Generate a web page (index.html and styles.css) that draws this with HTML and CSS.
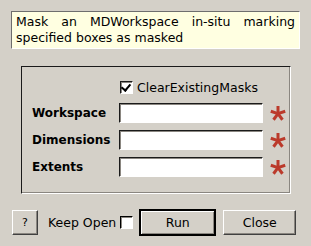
FILE: index.html
```html
<!DOCTYPE html>
<html lang="en">
<head>
    <meta charset="UTF-8">
    <title>MaskMD</title>
    <link rel="stylesheet" href="styles.css">
</head>
<body>
<div class="dialog">
    <div class="desc">Mask an MDWorkspace in-situ marking specified boxes as masked</div>

    <div class="group">
        <div class="fields">
            <span></span>
            <label class="check-row"><span class="check checked"></span>ClearExistingMasks</label>
            <span></span>

            <span class="field-label">Workspace</span>
            <span class="field-input"></span>
            <svg class="star" viewBox="0 0 16 16"><use href="#asterisk"/></svg>

            <span class="field-label">Dimensions</span>
            <span class="field-input"></span>
            <svg class="star" viewBox="0 0 16 16"><use href="#asterisk"/></svg>

            <span class="field-label">Extents</span>
            <span class="field-input"></span>
            <svg class="star" viewBox="0 0 16 16"><use href="#asterisk"/></svg>
        </div>
    </div>

    <div class="buttons">
        <button class="btn help">?</button>
        <span class="keep">Keep Open <span class="check"></span></span>
        <button class="btn run">Run</button>
        <button class="btn close">Close</button>
    </div>
</div>

<svg width="0" height="0" class="defs">
    <defs>
        <g id="asterisk" stroke="#bb3a2b" stroke-width="3" stroke-linecap="butt">
            <line x1="8" y1="8.6" x2="8" y2="1"/>
            <line x1="8" y1="8.6" x2="8" y2="1" transform="rotate(72 8 8.6)"/>
            <line x1="8" y1="8.6" x2="8" y2="1" transform="rotate(144 8 8.6)"/>
            <line x1="8" y1="8.6" x2="8" y2="1" transform="rotate(216 8 8.6)"/>
            <line x1="8" y1="8.6" x2="8" y2="1" transform="rotate(288 8 8.6)"/>
        </g>
    </defs>
</svg>
</body>
</html>
```

FILE: styles.css
```css
body {
    margin: 0;
    background-color: #d4d0c8;
    font-family: 'DejaVu Sans', sans-serif;
    font-size: 12px;
    color: #000;
}
.dialog {
    padding: 11px 12px 0 11px;
}
.desc {
    box-sizing: border-box;
    width: 289px;
    height: 38px;
    padding: 2px 4px 0 4px;
    background-color: #ffffe1;
    border: 1px solid;
    border-color: #6e6e6e #ffffff #ffffff #6e6e6e;
    text-align: justify;
    line-height: 16px;
    font-size: 12.5px;
}
.group {
    box-sizing: border-box;
    width: 270px;
    height: 128px;
    margin: 17px 0 0 10px;
    padding: 13px 0 0 9px;
    border: 1px solid;
    border-color: #1a1a1a #ffffff #ffffff #1a1a1a;
    box-shadow: inset -1px -1px 0 #8a8680;
}
.fields {
    display: grid;
    grid-template-columns: 88px 144px 23px;
    row-gap: 7px;
    align-items: center;
}
.check-row {
    display: flex;
    align-items: center;
    gap: 4px;
    height: 14px;
    margin-left: 1px;
    margin-bottom: 2px;
    font-size: 12.5px;
}
.check {
    display: inline-block;
    box-sizing: border-box;
    width: 13px;
    height: 13px;
    background: #fff;
    border: 1px solid;
    border-color: #1a1a1a #ffffff #ffffff #1a1a1a;
    box-shadow: 1px 1px 0 #8a8680 inset;
    position: relative;
}
.check.checked::after {
    content: '';
    position: absolute;
    left: 2px;
    top: 0;
    width: 4px;
    height: 7px;
    border: solid #000;
    border-width: 0 2px 2px 0;
    transform: rotate(40deg);
}
.field-label {
    font-weight: bold;
    margin-left: 1px;
}
.field-input {
    box-sizing: border-box;
    height: 20px;
    background: #fff;
    border: 1px solid;
    border-color: #1a1a1a #ffffff #ffffff #1a1a1a;
    box-shadow: inset 1px 1px 0 #8a8680;
}
.star {
    width: 16px;
    height: 16px;
    margin-left: 7px;
}
.defs {
    position: absolute;
}
.buttons {
    display: flex;
    align-items: center;
    margin-top: 15px;
    margin-left: 1px;
}
.btn {
    box-sizing: border-box;
    height: 25px;
    padding: 0;
    font-family: 'DejaVu Sans', sans-serif;
    font-size: 12.5px;
    color: #000;
    background-color: #d4d0c8;
    border: 1px solid;
    border-color: #ffffff #404040 #404040 #ffffff;
    box-shadow: inset -1px -1px 0 #8a8680;
}
.help {
    width: 26px;
    font-size: 11px;
}
.keep {
    display: flex;
    align-items: center;
    gap: 4px;
    margin-left: 10px;
    font-size: 12.5px;
}
.keep .check {
    border-color: #000 #fff #fff #000;
}
.run {
    width: 77px;
    height: 27px;
    margin-left: 6px;
    border: 2px solid #000;
    box-shadow: inset 1px 1px 0 #fff, inset -1px -1px 0 #8a8680;
}
.close {
    width: 73px;
    margin-left: 7px;
}
```
